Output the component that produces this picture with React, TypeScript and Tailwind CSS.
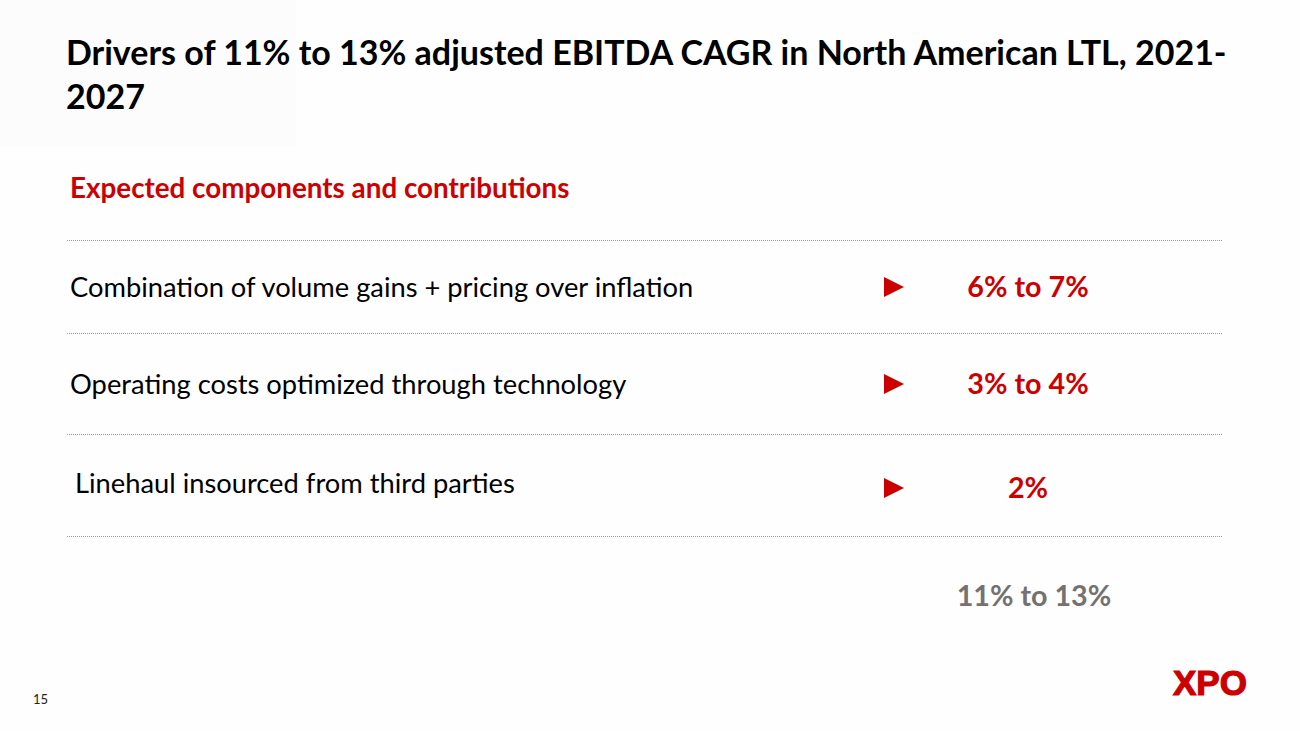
import React from "react";

const rows = [
  { label: "Combination of volume gains + pricing over inflation", value: "6% to 7%", pad: "pl-[3px]" },
  { label: "Operating costs optimized through technology", value: "3% to 4%", pad: "pl-[3px]" },
  { label: "Linehaul insourced from third parties", value: "2%", pad: "pl-[8px]" },
];

const Arrow = () => (
  <svg width="20" height="20" viewBox="0 0 20 20" className="shrink-0">
    <polygon points="0,0 20,10 0,20" fill="#cc0000" />
  </svg>
);

const App = () => {
  return (
    <div
      className="relative w-[1300px] h-[731px] bg-[#fefefe] text-black overflow-hidden"
      style={{ fontFamily: "Lato, 'Open Sans', sans-serif" }}
    >
      {/* faint backdrop behind the title */}
      <div className="absolute left-0 top-0 w-[296px] h-[147px] bg-[#fcfcfc]" />

      {/* title */}
      <div className="relative pt-[30px] pl-[66px] pr-[40px]">
        <h1 className="text-[34px] leading-[44px] font-bold">
          Drivers of 11% to 13% adjusted EBITDA CAGR in North American LTL, 2021-
          <br />
          2027
        </h1>
      </div>

      {/* subtitle */}
      <div className="relative pl-[70px] mt-[53px] text-[27.8px] leading-[34px] font-bold text-[#cc0000]">
        Expected components and contributions
      </div>

      {/* table */}
      <div className="ml-[67px] w-[1155px] mt-[35px] border-t border-dotted border-[#9a9a9a]">
        {rows.map((row, i) => (
          <div
            key={i}
            className={`flex items-center border-b border-dotted border-[#9a9a9a] ${
              i === 1 ? "h-[101px]" : i === 0 ? "h-[93px]" : "h-[102px]"
            }`}
          >
            <div
              className={`w-[817px] text-[27.3px] leading-[32px] ${row.pad} ${
                i === 2 ? "-mt-[6px]" : ""
              }`}
            >
              {row.label}
            </div>
            <div className={i === 2 ? "mt-[4px]" : ""}>
              <Arrow />
            </div>
            <div
              className={`w-[248px] text-center text-[28.7px] font-bold text-[#cc0000] ${
                i === 2 ? "mt-[4px]" : ""
              }`}
            >
              {row.value}
            </div>
          </div>
        ))}
        <div className="flex">
          <div className="w-[837px]" />
          <div className="w-[260px] text-center text-[28.7px] font-bold text-[#767171] mt-[37px]">
            11% to 13%
          </div>
        </div>
      </div>

      {/* footer */}
      <div className="absolute left-[33px] top-[690px] text-[13px] text-[#222]">15</div>
      <div
        className="absolute left-[1173px] top-[665px] text-[35px] leading-none font-black text-[#cc0000] tracking-[0px] [-webkit-text-stroke:1.2px_#cc0000]"
        style={{ fontFamily: "'Liberation Sans', Arial, sans-serif" }}
      >
        XPO
      </div>
    </div>
  );
};

export default App;
